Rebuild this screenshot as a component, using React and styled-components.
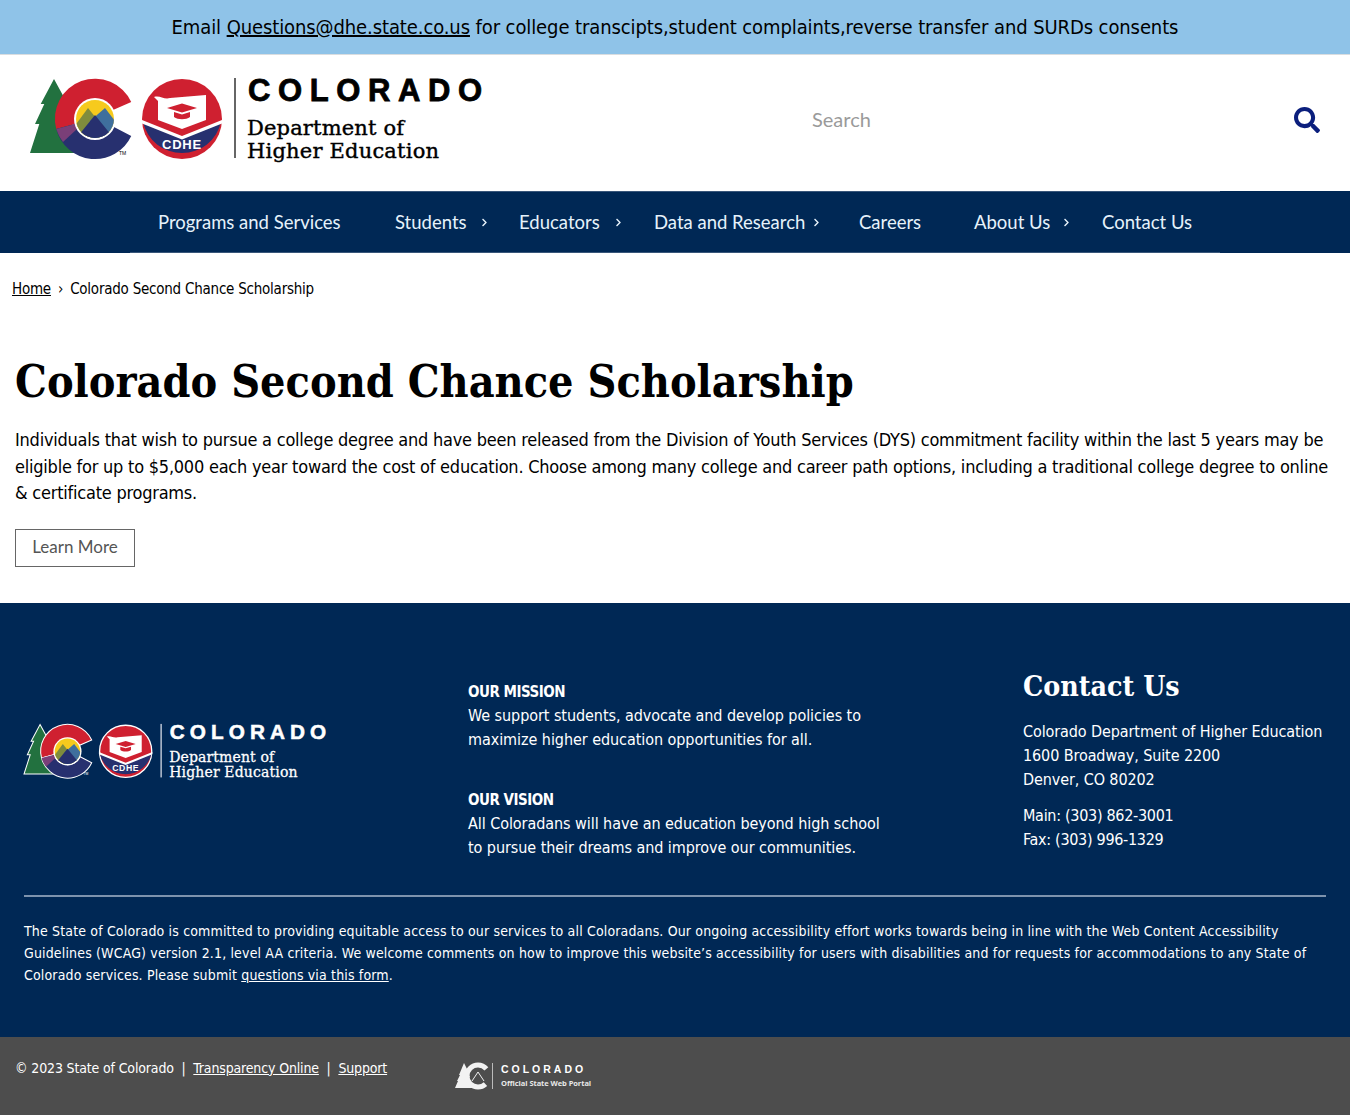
import React from "react";
import styled, { createGlobalStyle } from "styled-components";
import { FaSearch, FaChevronRight } from "react-icons/fa";

const navItems = [
  { id: 1, text: "Programs and Services", width: 237 },
  { id: 2, text: "Students", width: 124, chevron: 2 },
  { id: 3, text: "Educators", width: 135, chevron: 3 },
  { id: 4, text: "Data and Research", width: 205, chevron: 10 },
  { id: 5, text: "Careers", width: 115 },
  { id: 6, text: "About Us", width: 128, chevron: 3 },
  { id: 7, text: "Contact Us", width: 146 },
];

const BODY_FONT = `"DejaVu Sans Condensed", "DejaVu Sans", sans-serif`;
const NAV_FONT = `Lato, "Open Sans", sans-serif`;
const SLAB_FONT = `"DejaVu Serif Condensed", "DejaVu Serif", serif`;

const GlobalStyle = createGlobalStyle`
  html, body {
    margin: 0;
    padding: 0;
    background: #fff;
    font-family: ${BODY_FONT};
    color: #000;
  }
  * {
    box-sizing: border-box;
  }
`;

const CdheLogo = ({ dark, className }) => {
  const ink = dark ? "#fff" : "#000";
  const rule = dark ? "#cfd6e0" : "#666";
  const edge = dark ? { stroke: "#fff", strokeWidth: 1.5 } : {};
  return (
    <svg className={className} viewBox="0 0 456 86" overflow="visible" role="img" aria-label="Colorado Department of Higher Education">
      <defs>
        <clipPath id={dark ? "sunD" : "sunL"}>
          <circle cx="65" cy="42" r="19" />
        </clipPath>
      </defs>
      <path d="M24 2 L36 24 L50 76 L0 76 L9.3 47 L5 47 L14.3 27 L10.7 27 Z" fill="#22713f" {...edge} />
      <path d="M101.25 25 A40 40 0 0 0 26.25 52 L45 47 A21 21 0 0 1 83 33 Z" fill="#cf2030" {...edge} />
      <path d="M26.25 52 A40 40 0 0 0 101.25 59 L84 50 A21 21 0 0 1 45 47 Z" fill="#27306f" {...edge} />
      <path d="M26.25 52 L45 47 L47 52 L33 65 A40 40 0 0 1 26.25 52 Z" fill="#7a3f78" />
      <circle cx="65" cy="42" r="21" fill="#fff" />
      <g clipPath={`url(#${dark ? "sunD" : "sunL"})`}>
        <rect x="44" y="22" width="42" height="42" fill="#f6ca1d" />
        <path d="M44 50 L58 31 L70 46 L70 64 L44 64 Z" fill="#7f8c3d" />
        <path d="M60 44 L75 31 L88 48 L88 64 L60 64 Z" fill="#3f6f9d" />
        <path d="M44 64 L65 38 L86 64 Z" fill="#27306f" />
      </g>
      <text x="89" y="78" fontFamily='"Liberation Sans", sans-serif' fontSize="5" fill={ink}>TM</text>

      <circle cx="152" cy="42" r={dark ? 39 : 40} fill="#cf2030" stroke={dark ? "#fff" : "none"} strokeWidth={dark ? 2 : 0} />
      <path d="M113 45 L152 61 L191 45 A40 40 0 0 1 113 45 Z" fill="#27306f" />
      <path d="M112 43 L152 59 L192 43 L192 46.5 L152 62.5 L112 46.5 Z" fill="#fff" />
      <path d="M124 20 C130 18 134 23 140 21 L176 18 L176 43 L152 52 L128 43 L128 24 Z" fill="#fff" />
      <path d="M137 31 L152 26.5 L167 31 L152 35.5 Z" fill="#cf2030" />
      <path d="M144 35 L152 37.5 L160 35 L160 40 C156 43 148 43 144 40 Z" fill="#cf2030" />
      <text x="152" y="71.5" textAnchor="middle" fontFamily='"Liberation Sans", sans-serif' fontWeight="700" fontSize="13" letterSpacing="0.8" fill="#fff">CDHE</text>

      <rect x="204" y="1" width="2" height="80" fill={rule} />
      <text x="218" y="24" fontFamily='"Liberation Sans", sans-serif' fontWeight="700" fontSize="31" letterSpacing="7.6" fill={ink} stroke={ink} strokeWidth="0.8">COLORADO</text>
      <text x="217" y="58" fontFamily='"DejaVu Serif", serif' fontSize="21" fill={ink} textLength="157" stroke={ink} strokeWidth="0.4">Department of</text>
      <text x="217" y="81" fontFamily='"DejaVu Serif", serif' fontSize="21" fill={ink} textLength="192" stroke={ink} strokeWidth="0.4">Higher Education</text>
    </svg>
  );
};

const PortalLogo = ({ className }) => (
  <svg className={className} viewBox="0 0 140 30" role="img" aria-label="Colorado Official State Web Portal">
    <path d="M9 2 L13 10 L12 10 L15 16 L13 16 L18 27 L0 27 L3 20 L2 20 L5 14 L4 14 Z" fill="#f2f2f2" />
    <circle cx="23" cy="15" r="11" fill="none" stroke="#f2f2f2" strokeWidth="5" strokeDasharray="52 17" strokeDashoffset="-9" />
    <path d="M17 20 L23 11 L29 20" fill="none" stroke="#f2f2f2" strokeWidth="1" />
    <rect x="37" y="2" width="1" height="26" fill="#bbb" />
    <text x="46" y="12" fontFamily='"Liberation Sans", sans-serif' fontWeight="700" fontSize="10.5" textLength="82" lengthAdjust="spacing" fill="#fff">COLORADO</text>
    <text x="46" y="25" fontFamily='"Open Sans", sans-serif' fontWeight="700" fontSize="7.5" fill="#e8e8e8" textLength="90">Official State Web Portal</text>
  </svg>
);

const Banner = styled.div`
  height: 55px;
  background: #8fc3e8;
  border-bottom: 1px solid #d9dde0;
  display: flex;
  align-items: center;
  justify-content: center;
  font-size: 20px;
  letter-spacing: -0.1px;
  white-space: pre;
  a {
    color: #000;
  }
`;

const Masthead = styled.header`
  height: 136px;
  display: flex;
  align-items: center;
  justify-content: space-between;
  padding: 0 30px 6px;
`;

const HeaderLogo = styled(CdheLogo)`
  width: 456px;
  height: 86px;
`;

const SearchBox = styled.div`
  width: 508px;
  display: flex;
  align-items: center;
  justify-content: space-between;
  color: #0b1f7d;
  span {
    color: #9a9a9a;
    font-family: ${NAV_FONT};
    font-size: 20px;
    margin-top: -2px;
  }
`;

const NavBar = styled.nav`
  height: 62px;
  background: #002855;
  display: flex;
  justify-content: center;
`;

const NavInner = styled.ul`
  width: 1090px;
  margin: 0;
  padding: 0;
  list-style: none;
  display: flex;
  border-top: 1px solid #38567a;
  border-bottom: 1px solid #38567a;
`;

const NavItem = styled.li`
  width: ${(p) => p.$width}px;
  flex: none;
  display: flex;
  align-items: center;
  padding: 0 0 1px 28px;
  color: #e6f2fb;
  font-family: ${NAV_FONT};
  font-size: 18.5px;
  position: relative;
  svg {
    position: absolute;
    right: ${(p) => p.$chevron}px;
    top: 26px;
  }
`;

const Crumbs = styled.div`
  padding: 26px 12px 0;
  font-size: 15px;
  line-height: 20px;
  letter-spacing: -0.23px;
  display: flex;
  gap: 7px;
  a {
    color: #000;
  }
`;

const Main = styled.main`
  padding: 54px 15px 36px;
`;

const Title = styled.h1`
  margin: 0 0 18px;
  font-family: ${SLAB_FONT};
  font-size: 44.5px;
  line-height: 56px;
  font-weight: 700;
`;

const Lead = styled.p`
  margin: 0 0 22px;
  font-size: 18px;
  line-height: 26.5px;
  letter-spacing: -0.23px;
`;

const OutlineButton = styled.a`
  display: inline-flex;
  align-items: center;
  justify-content: center;
  width: 120px;
  height: 38px;
  padding-bottom: 2px;
  border: 1px solid #666;
  color: #555;
  font-family: ${NAV_FONT};
  font-size: 17px;
  text-decoration: none;
`;

const Footer = styled.footer`
  background: #002855;
  color: #fff;
  padding: 68px 24px 50px;
  height: 434px;
`;

const FooterTop = styled.div`
  display: grid;
  grid-template-columns: 444px 555px 1fr;
  height: 226px;
  border-bottom: 2px solid #7d93ad;
  font-size: 16px;
  line-height: 24px;
`;

const FooterLogo = styled(CdheLogo)`
  width: 305px;
  height: 58px;
  margin-top: 52px;
`;

const Statement = styled.div`
  padding-top: 9px;
  letter-spacing: -0.06px;
  h4 {
    margin: 0;
    font-size: 15px;
    font-weight: 700;
    letter-spacing: -0.5px;
  }
  p {
    margin: 0 0 36px;
    max-width: 420px;
  }
`;

const ContactTitle = styled.h3`
  margin: 0 0 19px;
  font-family: ${SLAB_FONT};
  font-size: 28.3px;
  line-height: 30px;
  font-weight: 700;
`;

const Address = styled.p`
  margin: 0 0 12px;
  white-space: nowrap;
  letter-spacing: ${(p) => p.$tracking}px;
`;

const Legal = styled.p`
  margin: 23px 0 0;
  font-size: 14px;
  line-height: 22px;
  letter-spacing: 0.155px;
  a {
    color: #fff;
  }
`;

const BottomBar = styled.div`
  height: 78px;
  background: #4d4d4d;
  color: #fff;
  font-size: 14px;
  letter-spacing: -0.15px;
  display: flex;
  align-items: flex-start;
  padding: 21px 15px 0;
  a {
    color: #fff;
  }
`;

const BottomLinks = styled.div`
  width: 440px;
  line-height: 20px;
`;

const Portal = styled(PortalLogo)`
  width: 140px;
  height: 30px;
  margin-top: 3px;
`;

export default function App() {
  return (
    <>
      <GlobalStyle />
      <Banner>
        Email <a href="#mail">Questions@dhe.state.co.us</a> for college transcipts,student complaints,reverse transfer and SURDs consents
      </Banner>
      <Masthead>
        <HeaderLogo />
        <SearchBox>
          <span>Search</span>
          <FaSearch size={26} />
        </SearchBox>
      </Masthead>
      <NavBar>
        <NavInner>
          {navItems.map((item) => (
            <NavItem key={item.id} $width={item.width} $chevron={item.chevron}>
              {item.text}
              {item.chevron && <FaChevronRight size={9} />}
            </NavItem>
          ))}
        </NavInner>
      </NavBar>
      <Crumbs>
        <a href="#home">Home</a>
        <span>›</span>
        <span>Colorado Second Chance Scholarship</span>
      </Crumbs>
      <Main>
        <Title>Colorado Second Chance Scholarship</Title>
        <Lead>
          Individuals that wish to pursue a college degree and have been released from the Division of Youth Services (DYS) commitment facility within the last 5 years may be eligible for up to $5,000 each year toward the cost of education. Choose among many college and career path options, including a traditional college degree to online &amp; certificate programs.
        </Lead>
        <OutlineButton href="#more">Learn More</OutlineButton>
      </Main>
      <Footer>
        <FooterTop>
          <FooterLogo dark />
          <Statement>
            <h4>OUR MISSION</h4>
            <p>We support students, advocate and develop policies to maximize higher education opportunities for all.</p>
            <h4>OUR VISION</h4>
            <p>All Coloradans will have an education beyond high school to pursue their dreams and improve our communities.</p>
          </Statement>
          <div>
            <ContactTitle>Contact Us</ContactTitle>
            <Address $tracking={-0.1}>
              Colorado Department of Higher Education<br />
              1600 Broadway, Suite 2200<br />
              Denver, CO 80202
            </Address>
            <Address $tracking={-0.3}>
              Main: (303) 862-3001<br />
              Fax: (303) 996-1329
            </Address>
          </div>
        </FooterTop>
        <Legal>
          The State of Colorado is committed to providing equitable access to our services to all Coloradans. Our ongoing accessibility effort works towards being in line with the Web Content Accessibility Guidelines (WCAG) version 2.1, level AA criteria. We welcome comments on how to improve this website’s accessibility for users with disabilities and for requests for accommodations to any State of Colorado services. Please submit <a href="#form">questions via this form</a>.
        </Legal>
      </Footer>
      <BottomBar>
        <BottomLinks>
          © 2023 State of Colorado &nbsp;|&nbsp; <a href="#t">Transparency Online</a> &nbsp;|&nbsp; <a href="#s">Support</a>
        </BottomLinks>
        <Portal />
      </BottomBar>
    </>
  );
}
